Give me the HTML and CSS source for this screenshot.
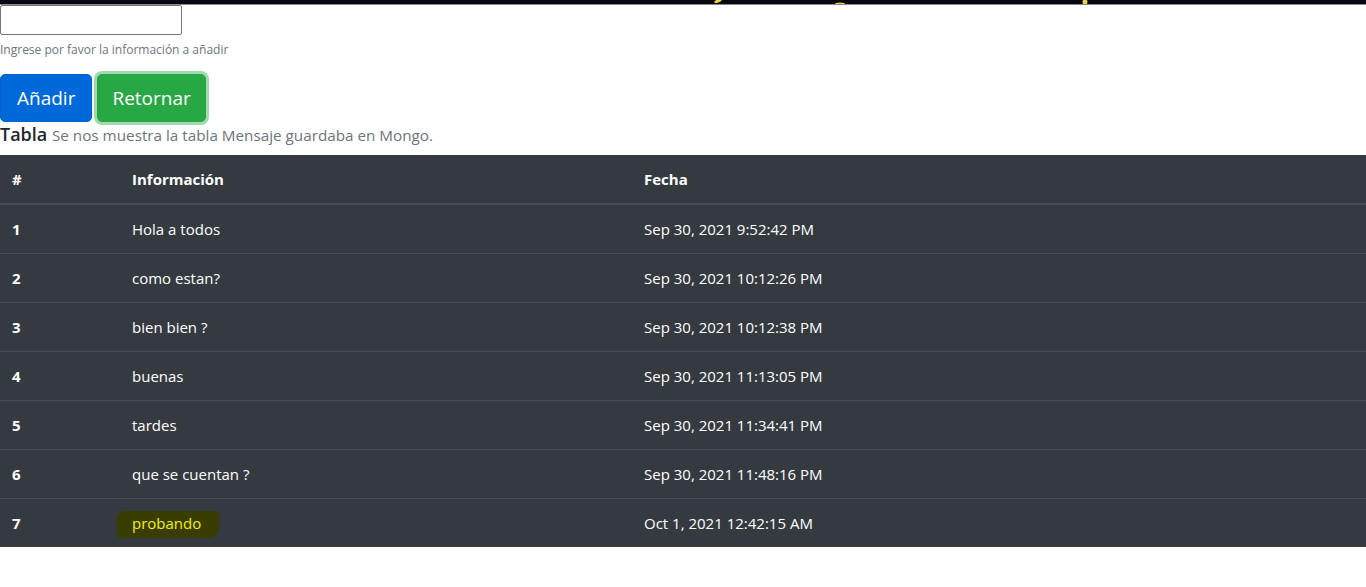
FILE: index.html
```html
<!DOCTYPE html>
<html lang="es">
<head>
<meta charset="utf-8">
<title>Mensajes</title>
<link rel="stylesheet" href="styles.css">
</head>
<body>
<div class="banner">
  <svg class="banner-art" width="1366" height="4" viewBox="0 0 1366 4">
    <ellipse cx="718" cy="1" rx="4" ry="1.5" fill="#e8d44d" transform="rotate(-20 718 1)"/>
    <ellipse cx="840" cy="4" rx="5" ry="1.5" fill="#e8d44d"/>
    <ellipse cx="1085" cy="2" rx="2.5" ry="2.5" fill="#e8d44d"/>
  </svg>
</div>
<form class="form">
  <input class="field" type="text">
  <small class="hint">Ingrese por favor la información a añadir</small>
  <div class="actions">
    <button type="button" class="btn btn-primary">Añadir</button>
    <button type="button" class="btn btn-success focused">Retornar</button>
  </div>
</form>
<h5 class="title">Tabla <small class="muted">Se nos muestra la tabla Mensaje guardaba en Mongo.</small></h5>
<table class="table">
  <colgroup><col class="c1"><col class="c2"><col class="c3"></colgroup>
  <thead>
    <tr><th>#</th><th>Información</th><th>Fecha</th></tr>
  </thead>
  <tbody>
    <tr><th>1</th><td>Hola a todos</td><td>Sep 30, 2021 9:52:42 PM</td></tr>
    <tr><th>2</th><td>como estan?</td><td>Sep 30, 2021 10:12:26 PM</td></tr>
    <tr><th>3</th><td>bien bien ?</td><td>Sep 30, 2021 10:12:38 PM</td></tr>
    <tr><th>4</th><td>buenas</td><td>Sep 30, 2021 11:13:05 PM</td></tr>
    <tr><th>5</th><td>tardes</td><td>Sep 30, 2021 11:34:41 PM</td></tr>
    <tr><th>6</th><td>que se cuentan ?</td><td>Sep 30, 2021 11:48:16 PM</td></tr>
    <tr><th>7</th><td><span class="mark">probando</span></td><td>Oct 1, 2021 12:42:15 AM</td></tr>
  </tbody>
</table>
</body>
</html>
```
FILE: styles.css
```css
* { box-sizing: border-box; }
body {
  margin: 0;
  font-family: "Open Sans", "Noto Sans", sans-serif;
  font-size: 16px;
  line-height: 1.5;
  color: #212529;
  background: #fff;
}
.banner {
  height: 5px;
  background: #07070f;
  border-bottom: 1px solid #8a8a8a;
  overflow: hidden;
}
.banner-art { display: block; }
.form { display: flex; flex-direction: column; align-items: flex-start; }
.field {
  width: 182px;
  height: 30px;
  margin: 0;
  border: 1px solid #767676;
  border-radius: 2px;
  font-size: 13px;
}
.hint {
  margin-top: 5px;
  font-size: 12px;
  line-height: 20px;
  color: #6c757d;
}
.actions {
  display: flex;
  gap: 5px;
  margin-top: 14px;
}
.btn {
  font-family: inherit;
  font-size: 19px;
  line-height: 30px;
  padding: 8px 16px;
  border: 1px solid transparent;
  border-radius: 5px;
  color: #fff;
  cursor: pointer;
}
.btn-primary { background: #0069d9; border-color: #0062cc; }
.btn-success { background: #28a745; border-color: #28a745; padding: 8px 14px; }
.focused { box-shadow: 0 0 0 3px rgba(72, 180, 97, 0.5); }
.title {
  margin: 0 0 8px;
  font-size: 18px;
  font-weight: 600;
  line-height: 24px;
}
.muted { font-size: 15.25px; font-weight: 400; color: #6c757d; }
.table {
  width: 100%;
  border-collapse: collapse;
  background: #343a40;
  color: #fff;
  table-layout: fixed;
  font-size: 15px;
}
.c1 { width: 120px; }
.c2 { width: 512px; }
.table th, .table td {
  padding: 12px;
  text-align: left;
  vertical-align: top;
  line-height: 24px;
  border-top: 1px solid #454d55;
}
.table thead th {
  border-top: none;
  border-bottom: 2px solid #454d55;
  font-weight: 700;
  font-size: 15px;
}
.table tbody th { font-weight: 700; }
.mark {
  display: inline-block;
  height: 27px;
  line-height: 25px;
  margin: 0 0 -3px -15px;
  padding: 0 18px 0 15px;
  color: #f4f000;
  background: #3a3d00;
  border-radius: 8px 3px 10px 4px;
}
```
